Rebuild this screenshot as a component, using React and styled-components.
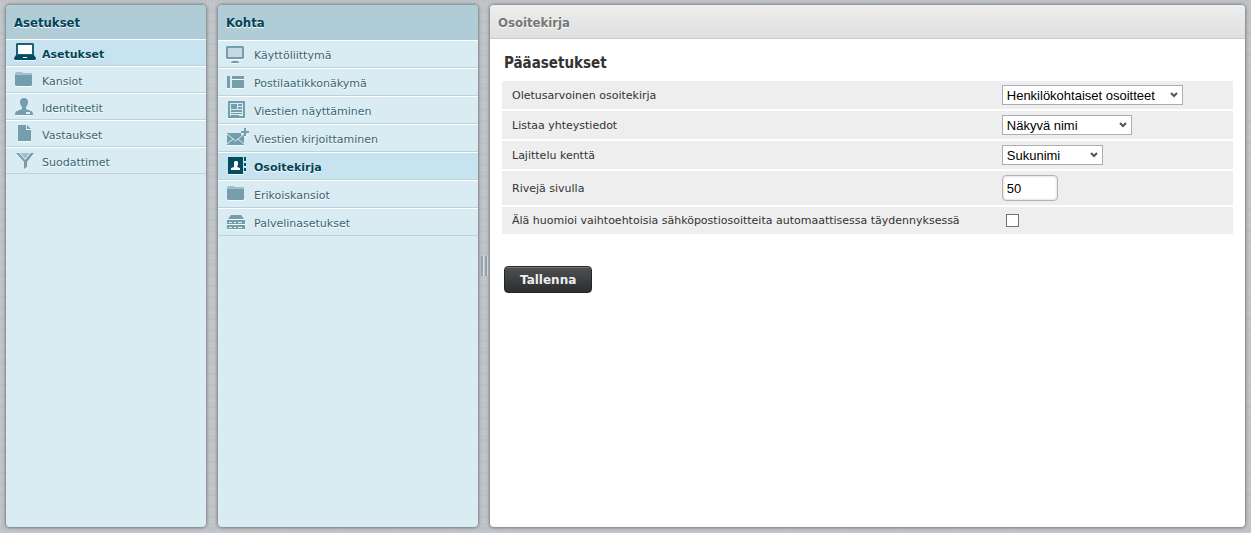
import React from "react";
import styled, { createGlobalStyle } from "styled-components";

const GlobalStyle = createGlobalStyle`
  * {
    box-sizing: border-box;
  }

  body {
    margin: 0;
    font-family: "DejaVu Sans", Verdana, sans-serif;
    font-size: 11px;
    color: #333;
    background-color: #bec3c7;
    background-image:
      repeating-linear-gradient(90deg, rgba(255, 255, 255, 0.07) 0 1px, transparent 1px 3px, rgba(255, 255, 255, 0.05) 3px 5px, transparent 5px 7px),
      repeating-linear-gradient(0deg, rgba(255, 255, 255, 0.07) 0 1px, transparent 1px 4px, rgba(0, 0, 0, 0.02) 4px 6px, transparent 6px 11px);
  }
`;

const teal = "#749eab";
const light = "#a0c1cb";
const dark = "#024d62";

const LaptopIcon = () => (
  <>
    <path d="M3 3h16l1 1v11H2V4z" fill="#1c6074" />
    <path d="M4 5h14v9H4z" fill="#fff" />
    <path d="M2 15h18l2 3v1l-1 1H1l-1-1v-1z" fill={dark} />
    <path d="M9 17h4v1H9z" fill="#fff" />
  </>
);

const FolderIcon = () => (
  <>
    <path d="M2 5h6l1 1h9v2H1V6h1z" fill={light} />
    <path d="M1 8h17v10l-1 1H2l-1-1z" fill={teal} />
  </>
);

const PersonIcon = () => (
  <>
    <path d="M10 4c3 0 4 2 4 4 0 2-1 4-2 5v2l5 2c2 1 2 2 2 4H1c0-2 0-3 2-4l5-2v-2C7 12 6 10 6 8c0-2 1-4 4-4z" fill={teal} />
    <path d="M12 18h4v2h-4z" fill="#d9ecf4" />
  </>
);

const DocumentIcon = () => (
  <>
    <path d="M4 4h8v5h5v11H4z" fill={teal} />
    <path d="M13 4l4 4h-4z" fill={teal} />
  </>
);

const FunnelIcon = () => (
  <>
    <path d="M6 5h10l-5 6z" fill={light} />
    <path d="M2 5h3l6 7 6-7h3l-7 9v5l-3 2v-7z" fill={teal} />
  </>
);

const MonitorIcon = () => (
  <>
    <path d="M1 5h16l1 1v11l-1 1H1l-1-1V6z" fill={teal} />
    <path d="M2 7h14v9H2z" fill="#c3dae2" />
    <path d="M7 20h4l2 1v1H5v-1z" fill={teal} />
  </>
);

const LayoutIcon = () => (
  <>
    <path d="M1 7h3v12H1zM6 11h12v8H6z" fill={teal} />
    <path d="M6 7h12v3H6z" fill={teal} />
  </>
);

const NewsIcon = () => (
  <>
    <path d="M2 4h17v17H2z" fill={teal} />
    <path d="M4 6h13v13H4z" fill="#d9ecf4" />
    <path d="M5 7h6v5H5zM12 7h4v2h-4zM12 10h4v2h-4zM5 13h11v2H5zM5 16h11v1H5zM5 18h8v1H5z" fill={teal} />
  </>
);

const ComposeIcon = () => (
  <>
    <path d="M1 8h17v12H1z" fill={teal} />
    <path d="M1 9l8.500 7L18 9M1 19l6-5M18 19l-6-5" fill="none" stroke="#d9ecf4" />
    <path d="M15 5h8v5h-8z" fill="#d9ecf4" />
    <path d="M18 3h2v3h3v2h-3v3h-2V8h-3V6h3z" fill={teal} />
  </>
);

const AddressBookIcon = () => (
  <>
    <path d="M2 4h15v17H2zM18 4h2v4h-2zM18 10h2v3h-2zM18 15h2v3h-2z" fill={dark} />
    <path d="M9 8h2l1 1v3l-1 2 3 1v2H5v-2l3-1V9z" fill="#fff" />
  </>
);

const ServerIcon = () => (
  <>
    <path d="M5 6h10l3 4H2z" fill={teal} />
    <path d="M1 11h18v4H1zM1 16h18v4H1z" fill={teal} />
    <path d="M3 13h3v1H3zM8 13h2v1H8zM12 13h4v1h-4zM3 18h3v1H3zM8 18h2v1H8zM12 18h4v1h-4z" fill="#e4f2f7" />
  </>
);

const sections = [
  { label: "Asetukset", icon: LaptopIcon, selected: true },
  { label: "Kansiot", icon: FolderIcon },
  { label: "Identiteetit", icon: PersonIcon },
  { label: "Vastaukset", icon: DocumentIcon },
  { label: "Suodattimet", icon: FunnelIcon },
];

const topics = [
  { label: "Käyttöliittymä", icon: MonitorIcon },
  { label: "Postilaatikkonäkymä", icon: LayoutIcon },
  { label: "Viestien näyttäminen", icon: NewsIcon },
  { label: "Viestien kirjoittaminen", icon: ComposeIcon },
  { label: "Osoitekirja", icon: AddressBookIcon, selected: true },
  { label: "Erikoiskansiot", icon: FolderIcon },
  { label: "Palvelinasetukset", icon: ServerIcon },
];

const ListPanel = ({ title, items, width, rowHeight, headHeight }) => (
  <SidePanel $width={width}>
    <SideTitle $height={headHeight}>{title}</SideTitle>
    <List>
      {items.map(({ label, icon: Icon, selected }) => (
        <li key={label}>
          <ListLink href="#" $height={rowHeight} $selected={selected}>
            <svg width="24" height="24" viewBox="0 0 24 24" aria-hidden="true">
              <Icon />
            </svg>
            <span>{label}</span>
          </ListLink>
        </li>
      ))}
    </List>
  </SidePanel>
);

const App = () => {
  return (
    <>
      <GlobalStyle />
      <Page>
        <ListPanel title="Asetukset" items={sections} width={200} rowHeight={27} headHeight={34} />
        <Splitter />
        <ListPanel title="Kohta" items={topics} width={260} rowHeight={28} headHeight={35} />
        <Splitter>
          <Grip />
          <Grip />
        </Splitter>
        <MainPanel>
          <MainTitle>Osoitekirja</MainTitle>
          <Form onSubmit={(e) => e.preventDefault()}>
            <Heading>Pääasetukset</Heading>
            <PrefTable>
              <tbody>
                <PrefRow $height={28}>
                  <th scope="row"><label htmlFor="book">Oletusarvoinen osoitekirja</label></th>
                  <td>
                    <Select id="book" $width={181}>
                      <option>Henkilökohtaiset osoitteet</option>
                    </Select>
                  </td>
                </PrefRow>
                <PrefRow $height={28}>
                  <th scope="row"><label htmlFor="listing">Listaa yhteystiedot</label></th>
                  <td>
                    <Select id="listing" $width={130}>
                      <option>Näkyvä nimi</option>
                    </Select>
                  </td>
                </PrefRow>
                <PrefRow $height={28}>
                  <th scope="row"><label htmlFor="sort">Lajittelu kenttä</label></th>
                  <td>
                    <Select id="sort" $width={101}>
                      <option>Sukunimi</option>
                    </Select>
                  </td>
                </PrefRow>
                <PrefRow $height={34}>
                  <th scope="row"><label htmlFor="rows">Rivejä sivulla</label></th>
                  <td>
                    <TextInput id="rows" type="text" defaultValue="50" />
                  </td>
                </PrefRow>
                <PrefRow $height={27}>
                  <th scope="row">
                    <label htmlFor="skip">
                      Älä huomioi vaihtoehtoisia sähköpostiosoitteita automaattisessa täydennyksessä
                    </label>
                  </th>
                  <td>
                    <Checkbox id="skip" type="checkbox" />
                  </td>
                </PrefRow>
              </tbody>
            </PrefTable>
            <SaveButton type="submit">Tallenna</SaveButton>
          </Form>
        </MainPanel>
      </Page>
    </>
  );
};

const Page = styled.div`
  display: flex;
  height: 100vh;
  padding: 5px 6px 6px;
`;

const Panel = styled.section`
  overflow: hidden;
  border-radius: 4px;
  box-shadow: 0 0 3px 1px rgba(80, 80, 80, 0.6);
`;

const SidePanel = styled(Panel)`
  flex: 0 0 ${({ $width }) => $width}px;
  background: #d9ecf4;
`;

const MainPanel = styled(Panel)`
  flex: 1;
  min-width: 0;
  background: #fff;
`;

const Title = styled.h1`
  margin: 0;
  padding: 0 8px;
  font-family: "DejaVu Sans Condensed", "DejaVu Sans", Tahoma, sans-serif;
  font-size: 13px;
  line-height: 36px;
  font-weight: bold;
`;

const SideTitle = styled(Title)`
  height: ${({ $height }) => $height}px;
  color: #004458;
  background: #b0ccd7;
  text-shadow: 0 1px 1px #fff;
`;

const MainTitle = styled(Title)`
  height: 34px;
  color: #777;
  background: linear-gradient(#eee, #dfdfdf);
  border-bottom: 1px solid #ccc;
  text-shadow: 0 1px 1px #fff;
`;

const List = styled.ul`
  margin: 0;
  padding: 0;
  list-style: none;
`;

const ListLink = styled.a`
  display: flex;
  gap: 4px;
  height: ${({ $height }) => $height}px;
  padding: 0 8px;
  border-top: 1px solid #fff;
  border-bottom: 1px solid #bbd3da;
  color: ${({ $selected }) => ($selected ? "#004458" : "#376572")};
  background: ${({ $selected }) => ($selected ? "#c7e3ef" : "transparent")};
  font-weight: ${({ $selected }) => ($selected ? "bold" : "normal")};
  text-decoration: none;
  text-shadow: 0 1px 1px #fff;

  svg {
    flex: none;
    filter: drop-shadow(0 1px 0 rgba(255, 255, 255, 0.7));
  }

  span {
    line-height: 30px;
  }
`;

const Splitter = styled.div`
  display: flex;
  flex: 0 0 12px;
  gap: 1px;
  align-items: center;
  justify-content: center;
`;

const Grip = styled.div`
  width: 3px;
  height: 20px;
  border-right: 1px solid #dce1e4;
  background: #97a3ae;
`;

const Form = styled.form`
  padding: 14px 12px;
`;

const Heading = styled.h2`
  margin: 0 0 8px;
  padding: 0 2px;
  font-family: "DejaVu Sans Condensed", "DejaVu Sans", Tahoma, sans-serif;
  font-size: 15px;
  line-height: 20px;
`;

const PrefTable = styled.table`
  width: 100%;
  border-collapse: separate;
  border-spacing: 0;
  table-layout: fixed;

  th {
    width: 67%;
    font-weight: normal;
    text-align: left;
  }
`;

const PrefRow = styled.tr`
  height: ${({ $height }) => $height + 2}px;

  th,
  td {
    padding: 0 10px;
    background: #eee;
    border-bottom: 2px solid #fff;
    vertical-align: middle;
  }
`;

const Select = styled.select`
  display: block;
  width: ${({ $width }) => $width}px;
  height: 20px;
  padding: 0 4px;
  appearance: none;
  border: 1px solid #abadb3;
  border-radius: 0;
  color: #000;
  background: #fff url("data:image/svg+xml,%3Csvg xmlns='http://www.w3.org/2000/svg' width='8' height='6'%3E%3Cpath d='M1 1l3 3 3-3' fill='none' stroke='%23555' stroke-width='2'/%3E%3C/svg%3E") no-repeat right 4px center;
  font-family: "Liberation Sans", Arial, sans-serif;
  font-size: 13px;
`;

const TextInput = styled.input`
  display: block;
  width: 56px;
  height: 26px;
  padding: 0 4px;
  border: 1px solid #b2b2b2;
  border-radius: 4px;
  color: #000;
  background: #fff;
  box-shadow: inset 0 0 2px 1px rgba(0, 0, 0, 0.1);
  font-family: "Liberation Sans", Arial, sans-serif;
  font-size: 13px;
`;

const Checkbox = styled.input`
  display: block;
  width: 13px;
  height: 13px;
  margin: 0 4px;
  appearance: none;
  border: 1px solid #707070;
  background: #fff;

  &:checked {
    background: #555;
  }
`;

const SaveButton = styled.button`
  height: 27px;
  margin: 30px 2px 0;
  padding: 0 15px;
  border: 1px solid #1f262c;
  border-radius: 4px;
  color: #eee;
  background: linear-gradient(#505050, #2a2e31);
  box-shadow: inset 0 1px 0 #777;
  font-family: inherit;
  font-size: 12px;
  font-weight: bold;
`;

export default App;
